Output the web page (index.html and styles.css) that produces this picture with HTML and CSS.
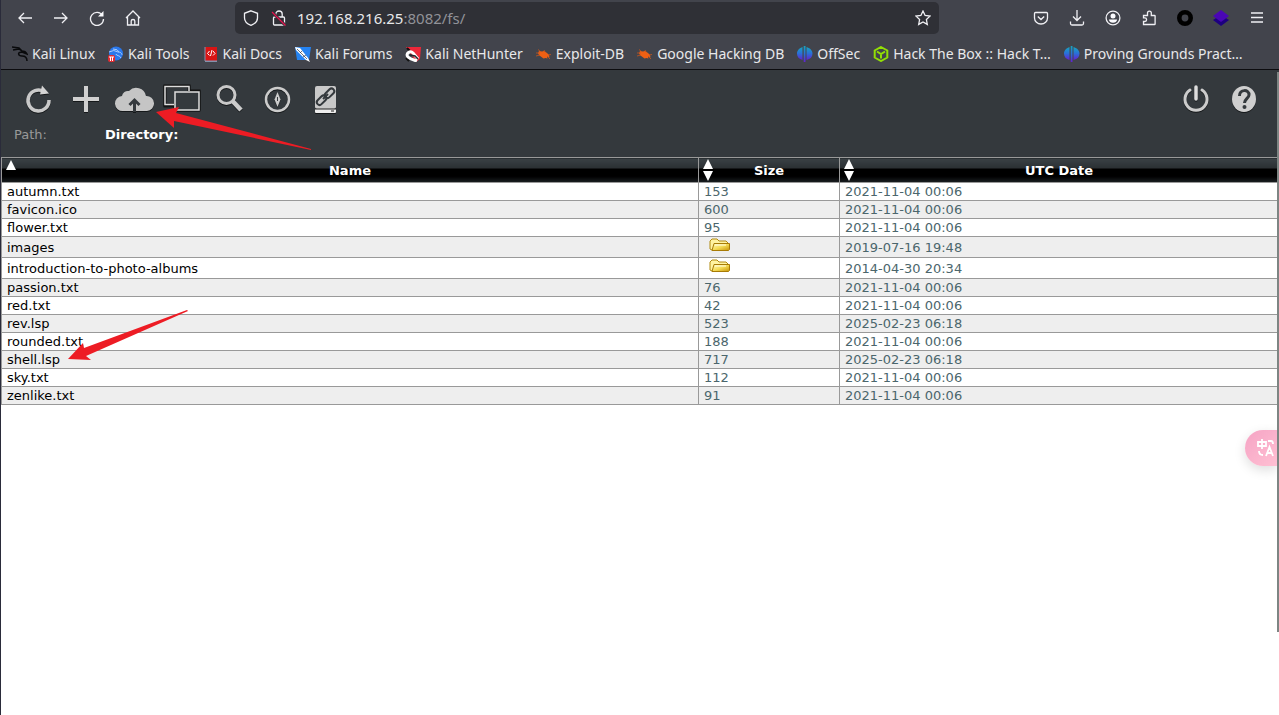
FILE: index.html
```html
<!DOCTYPE html>
<html lang="en">
<head>
<meta charset="utf-8">
<title>File Server</title>
<link rel="stylesheet" href="styles.css">
</head>
<body>
<svg class="defs" aria-hidden="true">
  <defs>
    <linearGradient id="offsec" x1="0" y1="0" x2="0" y2="1"><stop offset="0" stop-color="#16a5c0"/><stop offset=".5" stop-color="#2b6fd8"/><stop offset="1" stop-color="#6420d0"/></linearGradient>
    <linearGradient id="gold" x1="0" y1="0" x2="1" y2="1"><stop offset="0" stop-color="#fffbc0"/><stop offset=".5" stop-color="#f5dc55"/><stop offset="1" stop-color="#c79408"/></linearGradient>
    <symbol id="bug" viewBox="0 0 16 16"><path d="M3 5l3 .5 2-.5 3 2 2 2 .5 2.500-2.500-1 .5 2-2-.5-2 .5-2-1.500-2-1.500-1.500-2z" fill="#ee6014"/><path d="M0 7h4M2 3.500l3 2.500M8 4l1 2M0 10l4-1M12 9l3-.5M12 11l2 2" stroke="#c9571c" stroke-width=".8"/></symbol>
    <symbol id="orb" viewBox="0 0 16 16"><path d="M5.500 1v13C2 13 0 11 0 7.500S3 2 5.500 1zM9.500 1v13c4-1 6-3 6-6.500S12.500 2 9.500 1z" fill="url(#offsec)"/><path d="M6.700 0h1.800v16H6.700z" fill="url(#offsec)"/></symbol>
    <symbol id="folder" viewBox="0 0 22 14"><path d="M1 11V3l2-2h5l2 2h7l2 2v7H3z" fill="#fff3a0" stroke="#b18a10"/><path d="M3 12.500L5 5.500h15.500v6l-1 1z" fill="url(#gold)" stroke="#a87b05"/><path d="M6 7h11" stroke="#fffde0"/></symbol>
  </defs>
</svg>
<div class="window">
  <header class="browser">
    <nav class="navbar" aria-label="Browser">
      <div class="group">
        <button class="tool" aria-label="Back"><svg viewBox="0 0 16 16"><path d="M15 8H2M7 3L2 8l5 5"/></svg></button>
        <button class="tool" aria-label="Forward"><svg viewBox="0 0 16 16"><path d="M1 8h13M9 3l5 5-5 5"/></svg></button>
        <button class="tool" aria-label="Reload"><svg viewBox="0 0 16 16"><path d="M13.500 5.500A6.500 6.500 0 1 0 14.500 9"/><path d="M14.500 1v5.500H9z" fill="#fbfbfe" stroke="none"/></svg></button>
        <button class="tool" aria-label="Home"><svg viewBox="0 0 16 16"><path d="M1 8l7-7 7 7M2.500 7v8h11V7M6.200 15v-4q0-1.500 1.800-1.500T9.800 11v4"/></svg></button>
      </div>
      <div class="address">
        <svg class="small" viewBox="0 0 16 16"><path d="M8 .8l6.500 2.500V8c0 3-2.500 5.800-6.500 7.400C4 13.800 1.500 11 1.500 8V3.300z"/></svg>
        <svg class="small" viewBox="0 0 16 16"><path d="M2.500 8q0-1 1-1h9q1 0 1 1v6q0 1-1 1h-9q-1 0-1-1zM4.800 7V4a3.200 3 0 0 1 6.400 0v3"/><path d="M1 2l13 13" stroke="#2f3036" stroke-width="3"/><path d="M1 2l13.500 13.500" stroke="#e5124d"/></svg>
        <div class="url" role="textbox" aria-label="Address" contenteditable="true" spellcheck="false">192.168.216.25<span class="dim">:8082/fs/</span></div>
        <button class="star" aria-label="Bookmark this page"><svg viewBox="0 0 16 16"><path d="M8 1l2.100 4.500 4.900.6-3.600 3.400.9 4.900L8 12l-4.300 2.400.9-4.900L1 6.100l4.900-.6z"/></svg></button>
      </div>
      <div class="group">
        <button class="tool" aria-label="Pocket"><svg viewBox="0 0 16 16"><path d="M2.500 2.500h11q1 0 1 1V8a6.500 6 0 0 1-13 0V3.500q0-1 1-1zM4.800 6.500L8 9.500l3.200-3"/></svg></button>
        <button class="tool" aria-label="Downloads"><svg viewBox="0 0 16 16"><path d="M8 0v10M4 6.500l4 4 4-4M1.500 11.500v2q0 1.500 1.500 1.500h10q1.500 0 1.500-1.500v-2"/></svg></button>
        <button class="tool" aria-label="Account"><svg viewBox="0 0 16 16"><circle cx="8" cy="8" r="6.900"/><g fill="#fbfbfe" stroke="none"><circle cx="8" cy="6" r="2.500"/><path d="M3.800 9.500h8.400q-.8 3.300-4.200 3.300T3.800 9.500z"/></g></svg></button>
        <button class="tool" aria-label="Extensions"><svg viewBox="0 0 16 16"><path d="M2.500 14.500v-3h1.300a1.800 1.800 0 0 0 0-3.600H2.500V5.500h4V3a1.900 1.900 0 0 1 3.800 0v2.500h3.200q.6 0 .6.600v7.800q0 .6-.6.600z"/></svg></button>
        <button class="tool" aria-label="Ring extension"><svg viewBox="0 0 16 16"><circle cx="8" cy="8" r="5.700" stroke="#000" stroke-width="4.600"/></svg></button>
        <button class="tool" aria-label="Layers extension"><svg viewBox="0 0 16 16"><path d="M0 10l8-5 8 5-8 6z" fill="#1d0080" stroke="none"/><path d="M0 6l8-6 8 6-8 6z" fill="#4a06b5" stroke="none"/></svg></button>
        <button class="tool" aria-label="Menu"><svg viewBox="0 0 16 16"><path d="M2 3h12M2 7.500h12M2 12h12"/></svg></button>
      </div>
    </nav>
    <nav class="bookmarks" aria-label="Bookmarks">
      <a href="#"><svg viewBox="0 0 16 16"><path d="M0 1l7 1 3 3M1 4l6-1 3 2c3 0 4 1 5 3l-5-2c-5 0-4 4 0 4 3 0 5 2 5 5" fill="none" stroke="#090a0c" stroke-width="1.500"/></svg>Kali Linux</a>
      <a href="#"><svg viewBox="0 0 16 16"><circle cx="8" cy="7.500" r="7" fill="#2a78ec"/><path d="M1 6q5-3 9 0c4 0 4 3 4 3M5 3q5 0 6 3M8 8c0 2 4 1 5 4" fill="none" stroke="#a9cbfb" stroke-width="1"/><rect y="9" width="7" height="7" rx="2" fill="#e22b31"/><path d="M1 11h5M2.500 11v4M4.500 11v4" stroke="#fff"/></svg>Kali Tools</a>
      <a href="#"><svg viewBox="0 0 16 16"><path d="M2 1h12v14H2z" fill="#d91414"/><path d="M1.500 1h1v14h-1zM2 14.500h12V16H2z" fill="#8392ad"/><path d="M6.500 5l-2 2.500 2 2M10 5l2 2.500-2 2M9 4L7.500 10" fill="none" stroke="#fff"/></svg>Kali Docs</a>
      <a href="#"><svg viewBox="0 0 16 16"><path d="M0 1h16l-2 13H2z" fill="#2583f2"/><path d="M0 1l5 1 8 10 2 4-4-2L1 4z" fill="#fff"/><path d="M2 3l10 10M5 7l2-2M8 11l3-2" stroke="#26384e" stroke-width=".7"/></svg>Kali Forums</a>
      <a href="#"><svg viewBox="0 0 16 16"><path d="M1 1h15l-1 12-4 3z" fill="#ed2739"/><path d="M2 2l3 3M1 12l3 3" stroke="#111" stroke-width="2"/><path d="M13 13L8 7C5 4 0 8 3 11s7 3 9 4" fill="none" stroke="#fff" stroke-width="3"/><path d="M5 9l5 1 3 3" fill="none" stroke="#20252d" stroke-width="1.500"/></svg>Kali NetHunter</a>
      <a href="#"><svg><use href="#bug"/></svg>Exploit-DB</a>
      <a href="#"><svg><use href="#bug"/></svg>Google Hacking DB</a>
      <a href="#"><svg><use href="#orb"/></svg>OffSec</a>
      <a href="#"><svg viewBox="0 0 16 16"><path d="M8 1l6.300 3.500v7L8 15l-6.300-3.500v-7zM4 5.500L8 8l4-2.500M8 8v4.500" fill="none" stroke="#92df05" stroke-width="2"/></svg>Hack The Box :: Hack T…</a>
      <a href="#"><svg><use href="#orb"/></svg>Proving Grounds Pract…</a>
    </nav>
  </header>
  <main class="page">
    <div class="head">
      <div class="actions">
        <div class="group">
          <button class="action" aria-label="Refresh"><svg viewBox="0 0 40 32"><path d="M26 8.500A10.500 10.500 0 1 0 31 17" fill="none" stroke="#c9c9c9" stroke-width="3.500"/><path d="M22 11.500l2-9 7 8z" fill="#d4d4d4"/></svg></button>
          <button class="action" aria-label="New folder"><svg viewBox="0 0 40 32"><path d="M20 3v26M7 16h26" stroke="#d0d0d0" stroke-width="4"/></svg></button>
          <button class="action" aria-label="Upload"><svg viewBox="0 0 40 32"><path d="M9 28a7.500 7.500 0 0 1-1-15 6 6 0 0 1 7-5 10 10 0 0 1 17 5 7.500 7.500 0 0 1 1 15z" fill="#c5c5c5"/><path d="M20.500 29V18M15.500 22l5-5 5 5" fill="none" stroke="#34393d" stroke-width="3"/></svg></button>
          <button class="action" aria-label="Windows"><svg viewBox="0 0 40 32"><path d="M3 3h24v5h10v18H13v-4H3z" fill="#34393d" stroke="#111" stroke-width="3"/><path d="M12 21.500H3v-18h24V8" fill="none" stroke="#ddd" stroke-width="1.500"/><path d="M13 9h24v18H13z" fill="#34393d" stroke="#ddd" stroke-width="1.500"/></svg></button>
          <button class="action" aria-label="Search"><svg viewBox="0 0 40 32"><circle cx="16.500" cy="12" r="8.500" fill="none" stroke="#c9c9c9" stroke-width="3"/><path d="M22.500 18l8.500 9" stroke="#ccc" stroke-width="4.500"/></svg></button>
          <button class="action" aria-label="Explore"><svg viewBox="0 0 40 32"><circle cx="19.500" cy="16.500" r="11.500" fill="none" stroke="#ccc" stroke-width="2.500"/><path d="M19.500 9l3 7.500-3 7.500-3-7.500z" fill="#ccc"/><path d="M19.500 14v4" stroke="#34393d"/></svg></button>
          <button class="action" aria-label="Drive links"><svg viewBox="0 0 40 32"><rect x="9" y="3" width="21" height="23" rx="2" fill="#c9c9c9"/><path d="M9 26h21v3q0 1-1 1H10q-1 0-1-1z" fill="#eee"/><path d="M9 26h21M25 28h3" stroke="#222"/><g fill="none" stroke="#34393d" stroke-width="2"><rect x="10" y="14.500" width="11" height="5.500" rx="2.700" transform="rotate(-45 15.500 17.200)"/><rect x="18" y="7.500" width="11" height="5.500" rx="2.700" transform="rotate(-45 23.500 10.200)"/><path d="M17 16l5-5"/></g></svg></button>
        </div>
        <div class="group">
          <button class="action" aria-label="Log out"><svg viewBox="0 0 40 32"><path d="M14 7a11 11 0 1 0 12 0" fill="none" stroke="#ccc" stroke-width="3" stroke-linecap="round"/><path d="M20 4v12" stroke="#ddd" stroke-width="3.500" stroke-linecap="round"/></svg></button>
          <button class="action" aria-label="Help"><svg viewBox="0 0 40 32"><ellipse cx="20" cy="16" rx="12" ry="13" fill="#cfcfcf"/><path d="M15.500 13c-.5-7 10-7 9.500-1 0 3-4.500 4-4.500 8" fill="none" stroke="#34393d" stroke-width="3"/><circle cx="20.500" cy="24" r="2" fill="#34393d"/></svg></button>
        </div>
      </div>
      <div class="path"><span class="label">Path:</span><strong>Directory:</strong></div>
    </div>
    <table class="files">
      <colgroup><col><col class="size-col"><col class="date-col"></colgroup>
      <thead>
        <tr>
          <th><svg class="sort" viewBox="0 0 10 20"><path d="M5 0l5 10H0z"/></svg>Name</th>
          <th><svg class="sort" viewBox="0 0 10 20"><path d="M5-1l5 10H0zM0 11h10L5 21z"/></svg>Size</th>
          <th><svg class="sort" viewBox="0 0 10 20"><path d="M5-1l5 10H0zM0 11h10L5 21z"/></svg>UTC Date</th>
        </tr>
      </thead>
      <tbody>
        <tr><td><a href="#">autumn.txt</a></td><td>153</td><td>2021-11-04 00:06</td></tr>
        <tr><td><a href="#">favicon.ico</a></td><td>600</td><td>2021-11-04 00:06</td></tr>
        <tr><td><a href="#">flower.txt</a></td><td>95</td><td>2021-11-04 00:06</td></tr>
        <tr class="dir"><td><a href="#">images</a></td><td><svg class="folder"><use href="#folder"/></svg></td><td>2019-07-16 19:48</td></tr>
        <tr class="dir"><td><a href="#">introduction-to-photo-albums</a></td><td><svg class="folder"><use href="#folder"/></svg></td><td>2014-04-30 20:34</td></tr>
        <tr><td><a href="#">passion.txt</a></td><td>76</td><td>2021-11-04 00:06</td></tr>
        <tr><td><a href="#">red.txt</a></td><td>42</td><td>2021-11-04 00:06</td></tr>
        <tr><td><a href="#">rev.lsp</a></td><td>523</td><td>2025-02-23 06:18</td></tr>
        <tr><td><a href="#">rounded.txt</a></td><td>188</td><td>2021-11-04 00:06</td></tr>
        <tr><td><a href="#">shell.lsp</a></td><td>717</td><td>2025-02-23 06:18</td></tr>
        <tr><td><a href="#">sky.txt</a></td><td>112</td><td>2021-11-04 00:06</td></tr>
        <tr><td><a href="#">zenlike.txt</a></td><td>91</td><td>2021-11-04 00:06</td></tr>
      </tbody>
    </table>
  </main>
</div>
<svg class="arrow arrow-upload" viewBox="0 0 156 46"><path d="M0 6L23 1L20 7L155 43V44L18 15L18 22z" fill="#ed1c24"/></svg>
<svg class="arrow arrow-shell" viewBox="0 0 122 52"><path d="M0 49L15 33L16 38L119 0L120 1L18 46L23 50z" fill="#ed1c24"/></svg>
<button class="translate" aria-label="Translate"><svg viewBox="0 0 18 18" fill="none" stroke="#fff" stroke-width="1.800"><path d="M1 3h8v4H1zM5 0v10M11 2h3q2 0 2 3M2 12q0 4 4 4M9 17l3.500-9 3.500 9M10.500 14h4"/></svg></button>
<div class="scrollbar"></div>
</body>
</html>
```
FILE: styles.css
```css
* { box-sizing: border-box; }
body { margin: 0; background: #fff; font-family: "DejaVu Sans", sans-serif; font-size: 13px; color: #000; }
button { appearance: none; border: 0; padding: 0; background: none; color: inherit; }
a { color: inherit; text-decoration: none; }
svg { display: block; flex: none; }
.defs { position: absolute; width: 0; height: 0; }
.window { min-height: 100vh; border-left: 1px solid #2a2b3a; }
.group { display: flex; }

.browser { background: #42444c; color: #e8e8ea; border-bottom: 1px solid #0c0c0f; font-family: "Noto Sans", sans-serif; font-size: 14px; }
.navbar { display: flex; align-items: center; justify-content: space-between; gap: 84px; padding: 2px 4px 4px 6px; }
.tool { display: grid; place-items: center; width: 36px; height: 32px; }
.tool svg, .small, .star svg { width: 16px; height: 16px; fill: none; stroke: #f0f0f4; stroke-width: 1.3; }
.address { display: flex; align-items: center; flex: 1; gap: 10px; height: 32px; padding: 0 8px; background: #2f3036; border-radius: 5px; }
.small + .small { margin-left: 2px; }
.url { flex: 1; outline: 0; white-space: nowrap; font-size: 15px; }
.dim { color: #919298; }
.bookmarks { display: flex; align-items: center; height: 31px; padding: 0 11px; gap: 13px; white-space: nowrap; overflow: hidden; }
.bookmarks a { display: flex; align-items: center; gap: 4px; }
.bookmarks svg { width: 16px; height: 16px; }

.head { height: 87px; padding-top: 13px; background: #34393d; }
.actions { display: flex; justify-content: space-between; padding: 0 11px 0 13px; }
.action { width: 48px; height: 32px; display: grid; place-items: center; }
.action svg { width: 40px; height: 32px; filter: drop-shadow(0 1px 0 #15181a); }
.path { display: flex; gap: 58px; padding: 11px 13px; line-height: 18px; color: #fff; }
.label { color: #999; }

.files { width: 100%; border-collapse: collapse; table-layout: fixed; }
.size-col { width: 141px; }
.date-col { width: 439px; }
.files th { position: relative; height: 25px; padding: 0; border: 1px solid #999; background: linear-gradient(#3a4145, #2b3033 40%, #000 40%, #000 75%, #1b2023); color: #fff; line-height: 17px; }
.files td { height: 18px; padding: 0 5px; border: 1px solid #999; line-height: 17px; color: #4b666c; }
.files td:first-child { color: #000; }
.files tbody tr:nth-child(even) { background: #eee; }
.files .dir td { height: 21px; }
.sort { position: absolute; left: 4px; top: 2px; width: 10px; height: 20px; fill: #fff; overflow: visible; }
.folder { width: 22px; height: 14px; margin: 0 5px 4px; }

.arrow { position: absolute; pointer-events: none; }
.arrow-upload { left: 156px; top: 106px; width: 156px; height: 46px; }
.arrow-shell { left: 68px; top: 310px; width: 122px; height: 52px; }
.translate { position: fixed; right: 2px; top: 430px; width: 32px; height: 36px; padding-left: 12px; border-radius: 18px 0 0 18px; background: linear-gradient(135deg, #f5a3c4, #ffc0d3); box-shadow: 0 4px 12px #0002; }
.translate svg { width: 18px; height: 18px; }
.scrollbar { position: fixed; right: 0; top: 72px; width: 2px; height: 560px; background: #7d8583; }
```
